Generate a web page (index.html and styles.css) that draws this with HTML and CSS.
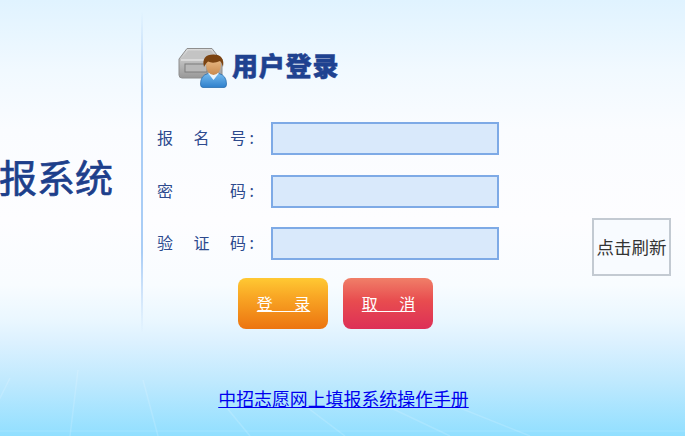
FILE: index.html
```html
<!DOCTYPE html>
<html lang="zh-CN">
<head>
<meta charset="utf-8">
<title>用户登录</title>
<link rel="stylesheet" href="styles.css">
</head>
<body>
<svg class="rays" viewBox="0 0 685 106" width="685" height="106" aria-hidden="true">
  <g fill="none" stroke="#fff" stroke-opacity=".15" stroke-width="1.5">
    <path d="M10 48 L-2 72"/>
    <path d="M78 40 L70 106"/>
    <path d="M143 50 L158 106"/>
    <path d="M222 72 L250 106"/>
    <path d="M300 72 L345 106"/>
    <path d="M370 68 L450 106"/>
    <path d="M440 70 L530 106"/>
    <path d="M0 101 L685 101" stroke-opacity=".1"/>
  </g>
</svg>
<main class="page">
  <section class="banner">
    <h1 class="banner-title">中招志愿网上填报系统</h1>
  </section>
  <section class="panel">
    <header class="panel-head">
      <svg class="user-icon" viewBox="0 0 49 41" width="49" height="41" aria-hidden="true">
        <defs>
          <linearGradient id="box" x1="0" y1="0" x2="0" y2="1">
            <stop offset="0" stop-color="#dcdcdc"/><stop offset="1" stop-color="#989898"/>
          </linearGradient>
          <linearGradient id="shirt" x1="0" y1="0" x2="0" y2="1">
            <stop offset="0" stop-color="#74baee"/><stop offset="1" stop-color="#2f80cc"/>
          </linearGradient>
          <linearGradient id="face" x1="0" y1="0" x2="0" y2="1">
            <stop offset="0" stop-color="#f0c592"/><stop offset="1" stop-color="#c98a4e"/>
          </linearGradient>
        </defs>
        <path d="M9 1.500 H34 L42 12 H44 V28 Q44 31 41 31 H4 Q1 31 1 28 V12 Z" fill="url(#box)" stroke="#8e8e8e"/>
        <path d="M3 13 L10 3.500 H33 L40 13 Z" fill="#c4c4c4"/>
        <path d="M3 13 H42" stroke="#efefef" stroke-width="1"/>
        <rect x="7" y="17" width="22" height="8" fill="#b8b8b8" stroke="#7d7d7d" stroke-width="1"/>
        <path d="M25 40.500 Q22.500 40.500 22.500 37 Q22.500 28.500 30 26.500 H41 Q48.500 28.500 48.500 37 Q48.500 40.500 46 40.500 Z" fill="url(#shirt)" stroke="#2a6fb0" stroke-width=".8"/>
        <path d="M30 26 L35.500 33 L41 26 Z" fill="#eaf4fc"/>
        <ellipse cx="35.500" cy="18" rx="7.500" ry="10" fill="url(#face)"/>
        <path d="M26 20 Q23 7.500 35.500 7.500 Q47 7.500 45 20 Q44 15.500 42 14 Q35 17 30 14.500 Q28 16 26 20 Z" fill="#7c4412"/>
      </svg>
      <h2 class="panel-title">用户登录</h2>
    </header>
    <form class="login-form">
      <label class="field-label" for="uid"><span>报</span><span>名</span><span>号&nbsp;:</span></label>
      <input class="field-input" id="uid" type="text">
      <span></span>
      <label class="field-label" for="pwd"><span>密</span><span>码&nbsp;:</span></label>
      <input class="field-input" id="pwd" type="password">
      <span></span>
      <label class="field-label" for="code"><span>验</span><span>证</span><span>码&nbsp;:</span></label>
      <input class="field-input" id="code" type="text">
      <button class="refresh" type="button">点击刷新</button>
      <div class="actions">
        <a class="btn btn-login" href="#">登&nbsp;&nbsp;&nbsp;&nbsp;&nbsp;&nbsp;录</a>
        <a class="btn btn-cancel" href="#">取&nbsp;&nbsp;&nbsp;&nbsp;&nbsp;&nbsp;消</a>
      </div>
    </form>
  </section>
</main>
<footer class="manual"><a href="#">中招志愿网上填报系统操作手册</a></footer>
</body>
</html>
```

FILE: styles.css
```css
* { box-sizing: border-box; }
html, body { margin: 0; height: 100%; }
body {
  position: relative;
  width: 685px;
  height: 436px;
  overflow: hidden;
  font-family: "Noto Sans CJK SC", sans-serif;
  background: linear-gradient(180deg, #e0f3ff 0, #f1f9ff 70px, #fafcff 130px, #fdfdff 220px, #f8fcff 285px, #eaf7ff 320px, #dcf1ff 342px, #bfe9fe 382px, #91dfff 436px);
}
.rays { position: absolute; left: 0; bottom: 0; }
.page { position: relative; display: flex; height: 376px; }
.banner {
  width: 141px;
  flex: none;
  display: flex;
  justify-content: flex-end;
  align-items: flex-start;
  padding: 149px 28px 0 0;
  overflow: hidden;
}
.banner-title {
  margin: 0;
  font-size: 38px;
  line-height: 54px;
  font-weight: 400;
  color: #1d3f8b;
  -webkit-text-stroke: .7px #1d3f8b;
  white-space: nowrap;
  flex: none;
}
.panel {
  flex: 1;
  margin-top: 12px;
  height: 320px;
  padding: 30px 0 0 14px;
  border-left: 2px solid;
  border-image: linear-gradient(180deg, rgba(160,200,245,0) 0, #a9cdf6 25%, #a9cdf6 75%, rgba(160,200,245,0) 100%) 1;
}
.panel-head { display: flex; align-items: center; height: 46px; padding-left: 21px; gap: 5px; }
.user-icon { flex: none; margin-top: 4px; filter: blur(.35px); }
.panel-title {
  margin: 0;
  font-size: 26px;
  line-height: 36px;
  font-weight: 900;
  color: #1f4290;
  -webkit-text-stroke: .5px #1f4290;
  letter-spacing: .8px;
}
.login-form {
  margin-top: 34px;
  display: grid;
  grid-template-columns: 114px 228px 172px;
  grid-auto-rows: 33px;
  row-gap: 19.500px;
}
.field-label {
  display: flex;
  justify-content: space-between;
  align-items: center;
  width: 97px;
  padding-bottom: 3px;
  font-size: 16px;
  color: #2d4a8e;
  font-weight: 400;
}
.field-input {
  width: 228px;
  height: 33px;
  border: 2px solid #7eaae6;
  background: #d9e9fb;
  padding: 0 4px;
  outline: none;
}
.refresh {
  justify-self: end;
  align-self: start;
  width: 79px;
  height: 58px;
  margin: -9px 0 0 0;
  padding: 0;
  border: 2px solid #c3cad2;
  background: #f8fbff;
  color: #333;
  font: 17.500px/1 "Noto Sans CJK SC", sans-serif;
  white-space: nowrap;
}
.actions {
  grid-column: 1 / -1;
  display: flex;
  gap: 15px;
  padding-left: 81px;
  margin-top: -2px;
}
.btn {
  flex: none;
  display: flex;
  align-items: center;
  justify-content: center;
  width: 90px;
  height: 51px;
  padding-left: 1px;
  border-radius: 8px;
  color: #fff;
  font-size: 16px;
  text-decoration: underline;
  white-space: nowrap;
}
.btn-login { background: linear-gradient(180deg, #ffc933 0, #f9a825 35%, #ec7410 100%); }
.btn-cancel { background: linear-gradient(180deg, #f07f68 0, #e84c4f 45%, #dd2f57 100%); }
.manual { position: relative; text-align: center; padding: 6px 0 0 2px; font-size: 17.900px; line-height: 32px; width: 685px; }
.manual a { color: #0000ee; text-decoration: underline; white-space: nowrap; }
```
